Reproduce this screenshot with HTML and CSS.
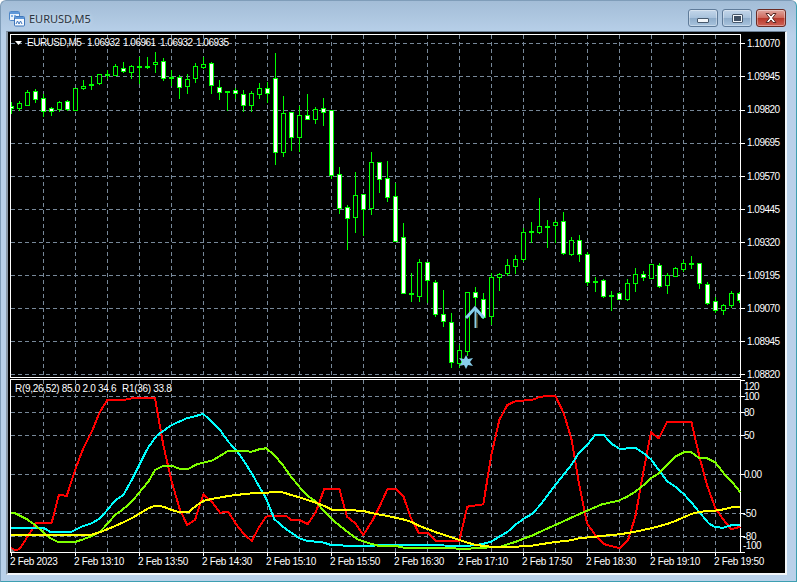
FILE: index.html
```html
<!DOCTYPE html>
<html lang="en">
<head>
<meta charset="utf-8">
<title>EURUSD,M5</title>
<link rel="stylesheet" href="styles.css">
</head>
<body>
<div class="window">
  <header class="titlebar">
    <svg class="app-icon" width="16" height="16" viewBox="0 0 16 16">
      <rect x="0.5" y="0.5" width="10" height="9" rx="1" fill="#e8f1fb" stroke="#4f86c6"/>
      <rect x="1" y="1" width="9" height="2" fill="#5e97d8"/>
      <rect x="2" y="4" width="2" height="2" fill="#7fb0e6"/>
      <rect x="5" y="4" width="2" height="2" fill="#7fb0e6"/>
      <rect x="5.5" y="5.5" width="10" height="9.5" rx="1" fill="#f5f9fe" stroke="#3f76bb"/>
      <rect x="6" y="6" width="9" height="2" fill="#5e97d8"/>
      <path d="M7 13l1.500-3 1.500 3 1.500-3 1.500 3" fill="none" stroke="#3f76bb"/>
    </svg>
    <span class="title">EURUSD,M5</span>
    <div class="controls">
      <button class="ctl" type="button" aria-label="Minimize"><span class="glyph-min"></span></button>
      <button class="ctl" type="button" aria-label="Maximize"><span class="glyph-max"></span></button>
      <button class="ctl ctl-close" type="button" aria-label="Close">
        <svg width="16" height="12" viewBox="0 0 16 12"><path d="M3 1.500h3l2 2.500 2-2.500h3l-3.500 4.500 3.500 4.500h-3l-2-2.500-2 2.500h-3l3.500-4.500z" fill="#fff" stroke="#5a2a25"/></svg>
      </button>
    </div>
  </header>
  <main class="client">
    <svg id="chart" class="chart" width="778" height="541" viewBox="8 32 778 541">
      <g id="grid"></g>
      <g id="frame"></g>
      <svg id="candles" x="11" y="35" width="729" height="342" viewBox="11 35 729 342"></svg>
      <g id="lines"></g>
      <polygon points="11,548 15,552 11,552" fill="#808080"/>

      <g class="marks">
        <polyline points="466,318 475,308 484,318" fill="none" stroke="#87ceeb" stroke-width="3"/>
        <path d="M475.500 308V328" stroke="#87ceeb" stroke-width="2"/>
        <path d="M477 314V328" stroke="#8a7a40" stroke-width="1"/>
        <polygon points="466,355 468,359 473,358 470,362 473,366 468,365 466,369 464,365 459,366 462,362 459,358 464,359" fill="#87ceeb"/>
      </g>

      <polygon points="15,41 22,41 18.500,45" fill="#fff"/>
      <text class="t n" x="27" y="46">EURUSD,M5<tspan x="87">1.06932</tspan><tspan x="123">1.06961</tspan><tspan x="160">1.06932</tspan><tspan x="196">1.06935</tspan></text>
      <text class="t d" x="15" y="392">R(9,26,52) 85.0 2.0 34.6</text>
      <text class="t d" x="122" y="392">R1(36) 33.8</text>

      <g class="t n">
        <text x="747" y="47">1.10070</text>
        <text x="747" y="80">1.09945</text>
        <text x="747" y="113">1.09820</text>
        <text x="747" y="146">1.09695</text>
        <text x="747" y="180">1.09570</text>
        <text x="747" y="213">1.09445</text>
        <text x="747" y="246">1.09320</text>
        <text x="747" y="279">1.09195</text>
        <text x="747" y="312">1.09070</text>
        <text x="747" y="345">1.08945</text>
        <text x="747" y="378">1.08820</text>
      </g>
      <g class="t n">
        <text x="744" y="390">120</text>
        <text x="744" y="400">100</text>
        <text x="744" y="416">80</text>
        <text x="744" y="439">50</text>
        <text x="744" y="478">0.00</text>
        <text x="743" y="517">-50</text>
        <text x="743" y="540">-80</text>
        <text x="743" y="549">-100</text>
      </g>
      <g class="t d">
        <text x="10" y="565">2 Feb 2023</text>
        <text x="74" y="565">2 Feb 13:10</text>
        <text x="138" y="565">2 Feb 13:50</text>
        <text x="202" y="565">2 Feb 14:30</text>
        <text x="266" y="565">2 Feb 15:10</text>
        <text x="330" y="565">2 Feb 15:50</text>
        <text x="394" y="565">2 Feb 16:30</text>
        <text x="458" y="565">2 Feb 17:10</text>
        <text x="522" y="565">2 Feb 17:50</text>
        <text x="586" y="565">2 Feb 18:30</text>
        <text x="650" y="565">2 Feb 19:10</text>
        <text x="714" y="565">2 Feb 19:50</text>
      </g>
    </svg>
  </main>
</div>
<script src="chart.js"></script>
</body>
</html>
```

FILE: styles.css
```css
html, body { margin: 0; padding: 0; background: #fff; }
body { width: 798px; height: 583px; overflow: hidden; }

.window {
  box-sizing: border-box;
  width: 797px;
  height: 582px;
  display: flex;
  flex-direction: column;
  background: linear-gradient(#a3bdd7 0, #b9d1ea 34px);
  border-radius: 6px 6px 0 0;
  border: 1px solid #7f9db9;
  border-bottom: 1px solid #3d9fb1;
  border-right: 1px solid #3d9fb1;
}

.titlebar {
  height: 30px;
  flex: none;
  display: flex;
  align-items: flex-start;
  padding-left: 8px;
}

.app-icon { margin-top: 10px; flex: none; }

.title {
  margin-left: 4px;
  margin-top: 9px;
  font: 11px/18px "Noto Sans", "Open Sans", sans-serif;
  color: #2b3440;
  text-shadow: 0 0 4px #dfeaf5;
}

.controls {
  margin-left: auto;
  margin-top: 8px;
  margin-right: 10px;
  display: flex;
  gap: 4px;
}

.ctl {
  box-sizing: border-box;
  width: 30px;
  height: 18px;
  padding: 0;
  display: flex;
  align-items: center;
  justify-content: center;
  border: 1px solid #5f7b99;
  border-radius: 3px;
  background: linear-gradient(#c3d6ea 0, #a8c2dc 48%, #8eacca 52%, #a9c4de 100%);
  box-shadow: inset 0 0 0 1px rgba(255,255,255,.35);
}

.ctl-close {
  border-color: #6b2b24;
  background: linear-gradient(#e0a79f 0, #cf6a5d 48%, #b8392b 52%, #cf6256 100%);
}

.glyph-min {
  display: block;
  width: 10px;
  height: 3px;
  margin-top: 4px;
  background: #f2f6fa;
  border: 1px solid #46586c;
  border-radius: 1px;
}

.glyph-max {
  box-sizing: border-box;
  display: block;
  width: 11px;
  height: 9px;
  background: #3e4f63;
  border: 2px solid #f2f6fa;
  outline: 1px solid #46586c;
  outline-offset: -1px;
  border-radius: 1px;
}

.client {
  flex: 1;
  margin: 0 9px 7px 5px;
  display: flex;
  background: #000;
  border-left: 2px solid #8a99a8;
  border-top: 1px solid #6c8095;
  border-right: 2px solid #f2f6fa;
  border-bottom: 2px solid #f2f6fa;
  box-sizing: border-box;
}

.chart { display: block; flex: none; }

.t {
  font-family: "Liberation Sans", Arial, sans-serif;
  font-size: 10px;
  fill: #fff;
}

.n { letter-spacing: -0.5px; }
.d { letter-spacing: -0.3px; }

.grid-line {
  stroke: #778899;
  stroke-width: 1;
  stroke-dasharray: 4 3;
  shape-rendering: crispEdges;
}

.frame-line {
  stroke: #fff;
  stroke-width: 1;
  shape-rendering: crispEdges;
}

.wick { stroke: #00ff00; stroke-width: 1; shape-rendering: crispEdges; }
.body { stroke: #00ff00; stroke-width: 1; shape-rendering: crispEdges; }
.body-down { fill: #fff; }
.body-up { fill: #000; }
.doji { fill: #00ff00; shape-rendering: crispEdges; }

.ind { fill: none; stroke-width: 2; stroke-linejoin: round; shape-rendering: crispEdges; }
.ind-red { stroke: #ff0000; }
.ind-cyan { stroke: #00ffff; }
.ind-green { stroke: #7fff00; }
.ind-yellow { stroke: #ffff00; }
```

FILE: chart.js
```js
var NS = 'http://www.w3.org/2000/svg';
function el(parent, tag, attrs) {
  var n = document.createElementNS(NS, tag);
  for (var k in attrs) n.setAttribute(k, attrs[k]);
  parent.appendChild(n);
  return n;
}

// grid
var grid = document.getElementById('grid');
var frame = document.getElementById('frame');
function hline(g, cls, y, x1, x2) { el(g, 'line', { 'class': cls, x1: x1, x2: x2, y1: y + .5, y2: y + .5 }); }
function vline(g, cls, x, y1, y2) { el(g, 'line', { 'class': cls, x1: x + .5, x2: x + .5, y1: y1, y2: y2 }); }

var mainY = [43, 76, 110, 143, 176, 209, 242, 275, 308, 341, 374];
var subY = [396, 412, 435, 474, 513, 536];
mainY.forEach(function (y) { hline(grid, 'grid-line', y, 11, 740); hline(frame, 'frame-line', y, 741, 745); });
subY.forEach(function (y) { hline(grid, 'grid-line', y, 11, 740); hline(frame, 'frame-line', y, 741, 745); });
for (var x = 43; x <= 715; x += 32) {
  vline(grid, 'grid-line', x, 35, 377);
  vline(grid, 'grid-line', x, 380, 552);
}
hline(frame, 'frame-line', 34, 10, 741);
hline(frame, 'frame-line', 377, 10, 741);
hline(frame, 'frame-line', 379, 10, 741);
hline(frame, 'frame-line', 552, 10, 741);
vline(frame, 'frame-line', 10, 34, 378);
vline(frame, 'frame-line', 10, 379, 553);
vline(frame, 'frame-line', 740, 34, 378);
vline(frame, 'frame-line', 740, 379, 553);
hline(frame, 'frame-line', 380, 741, 745);
hline(frame, 'frame-line', 552, 741, 745);
for (var tx = 11; tx <= 715; tx += 64) vline(frame, 'frame-line', tx, 553, 556);

// candles: wick top, wick bottom, body top, body bottom, kind (W down, H up, D doji)
var candles = [
[102,113,106,108,'W'],[101,110,103,108,'H'],[90,105,92,105,'H'],[89,102,91,99,'W'],
[94,116,98,111,'W'],[107,115,108,111,'W'],[101,111,102,109,'H'],[100,110,101,109,'W'],
[88,110,88,110,'H'],[80,89,86,88,'H'],[76,89,84,84,'D'],[74,84,74,83,'H'],
[70,78,74,74,'D'],[64,75,66,75,'H'],[62,72,68,71,'W'],[65,78,66,72,'H'],
[57,83,66,66,'D'],[57,68,66,66,'D'],[52,72,62,64,'H'],[58,80,61,78,'W'],
[70,85,77,77,'D'],[75,98,77,87,'W'],[74,93,79,86,'H'],[63,82,66,78,'H'],
[57,68,64,67,'H'],[62,93,63,85,'W'],[80,99,87,92,'W'],[91,110,91,91,'D'],
[88,98,90,93,'W'],[90,111,94,105,'W'],[91,111,93,105,'H'],[83,98,88,94,'H'],
[82,102,88,93,'W'],[53,164,78,152,'W'],[96,156,113,152,'H'],[112,150,112,137,'W'],
[106,151,115,137,'H'],[94,119,115,119,'W'],[107,123,109,119,'H'],[98,125,108,112,'W'],
[110,178,110,175,'W'],[167,213,174,208,'W'],[205,249,207,218,'W'],[172,232,195,217,'H'],
[194,235,194,209,'W'],[152,214,162,208,'H'],[162,192,162,179,'W'],[161,201,178,197,'W'],
[183,241,196,241,'W'],[223,293,237,293,'W'],[273,301,293,293,'D'],[259,301,262,296,'H'],
[262,302,262,280,'W'],[280,316,282,314,'W'],[290,326,314,321,'W'],[313,367,322,362,'W'],
[345,367,350,363,'H'],[292,355,292,351,'H'],[287,305,292,297,'W'],[293,318,299,317,'W'],
[273,324,277,316,'H'],[273,290,274,277,'H'],[259,275,265,273,'H'],[255,273,259,266,'H'],
[228,261,232,259,'H'],[222,242,231,231,'D'],[198,233,226,232,'H'],[220,247,226,226,'D'],
[220,242,222,225,'H'],[212,254,221,253,'W'],[237,255,240,254,'H'],[235,261,240,254,'W'],
[252,285,254,282,'W'],[277,291,281,281,'D'],[279,297,280,296,'W'],[291,310,295,295,'D'],
[292,299,293,299,'W'],[279,300,283,299,'H'],[268,291,274,283,'H'],[271,280,274,277,'W'],
[264,278,264,278,'H'],[263,287,265,286,'W'],[273,293,275,285,'H'],[267,276,268,276,'H'],
[260,271,263,269,'H'],[256,268,263,263,'D'],[263,288,263,283,'W'],[282,304,284,303,'W'],
[297,312,301,310,'W'],[304,314,305,310,'H'],[291,307,293,305,'H'],[292,302,293,300,'W']
];
var cg = document.getElementById('candles');
candles.forEach(function (c, i) {
  var x = 11 + 8 * i;
  el(cg, 'line', { 'class': 'wick', x1: x + .5, x2: x + .5, y1: c[0], y2: c[1] + 1 });
  if (c[4] === 'D') {
    el(cg, 'rect', { 'class': 'doji', x: x - 2, y: c[2], width: 5, height: 2 });
  } else {
    el(cg, 'rect', {
      'class': 'body ' + (c[4] === 'W' ? 'body-down' : 'body-up'),
      x: x - 1.5, y: c[2] + .5, width: 4, height: c[3] - c[2]
    });
  }
});

// indicator lines, as [x origin, x, y, x, y ...] runs read at 3x scale
function series(runs) {
  var pts = [];
  runs.forEach(function (r) {
    var ox = r[0];
    for (var i = 1; i < r.length; i += 2) {
      pts.push((ox + r[i] / 3).toFixed(1) + ',' + (370 + r[i + 1] / 3).toFixed(1));
    }
  });
  return pts.join(' ');
}
var L = document.getElementById('lines');
var data = {
  red: [
    [0,33,535,45,540,58,538,70,520,95,480,107,460,155,458,177,374,200,378,227,295,250,235,275,185,300,125,322,90,370,90,395,85,465,85,490,225,515,335,540,420,562,465,585,450,610,373,635,395,660,428,685,425,708,462,730,490,755,513,778,470],
    [266,0,440,20,437,60,437,75,450,100,450,125,462,150,425,175,356,220,356,243,440,268,460,292,495,320,450,345,400,365,356,388,356,412,378,435,445,458,488,484,488,508,512,580,512,604,410,652,403,675,260,700,150,724,105,750,93],
    [532,0,90,25,80,70,77,95,130,118,205,140,335,165,460,190,495,215,522,263,535,288,510,310,440,335,300,357,187,380,205,405,157,478,155,505,270,525,345,550,415,575,450,597,478,625,470]
  ],
  cyan: [
    [0,33,473,130,473,150,485,215,485,250,468,275,460,300,445,322,420,345,392,370,375,395,330,420,280,445,232,470,197,515,165,560,145,610,132,635,155,660,180,685,215,708,240,730,270,755,310,778,350],
    [266,0,385,25,447,50,470,100,505,125,513,170,517,195,525,245,527,320,527,345,525,510,525,560,528,605,528,650,522,675,515,700,500,725,485,750,463,775,445],
    [532,0,432,25,405,70,345,118,285,140,250,165,225,190,195,215,195,240,222,263,237,310,233,335,250,357,268,380,300,405,333,430,350,455,372,478,397,505,430,530,460,550,472,575,473,600,465,625,465]
  ],
  green: [
    [0,33,428,45,430,80,447,105,465,130,487,155,507,175,516,225,516,250,508,275,498,300,485,322,462,345,435,370,417,395,395,420,365,445,335,465,300,490,288,515,287,540,297,565,297,590,283,635,272,660,258,685,242,708,242,755,245,778,238],
    [266,0,235,25,255,50,285,75,320,100,350,125,378,150,395,175,425,200,450,225,470,250,490,275,508,300,517,340,528,390,528,415,533,555,533,580,537,605,537,630,533,700,532,725,523,750,515,775,505],
    [532,0,497,25,485,70,465,118,443,165,422,210,403,260,392,285,380,310,365,335,345,357,325,380,310,405,285,430,260,455,247,478,247,503,265,525,265,550,277,575,310,600,335,625,367]
  ],
  yellow: [
    [0,33,495,270,495,300,487,345,468,370,457,395,445,420,430,445,415,465,407,490,410,515,420,540,427,565,427,585,410,610,393,635,387,685,378,708,375,755,370],
    [266,0,369,25,365,50,367,75,375,100,382,125,390,150,398,175,408,200,420,245,420,292,423,320,430,365,438,410,448,435,455,460,468,485,477,510,487,535,495,580,510,605,518,630,525,675,530,750,530],
    [532,0,527,25,523,70,516,118,511,140,505,190,500,215,497,263,493,310,485,357,475,405,462,430,453,478,432,505,425,550,422,575,418,600,412,625,410]
  ]
};
['red', 'cyan', 'green', 'yellow'].forEach(function (name) {
  el(L, 'polyline', { 'class': 'ind ind-' + name, points: series(data[name]) });
});
```
